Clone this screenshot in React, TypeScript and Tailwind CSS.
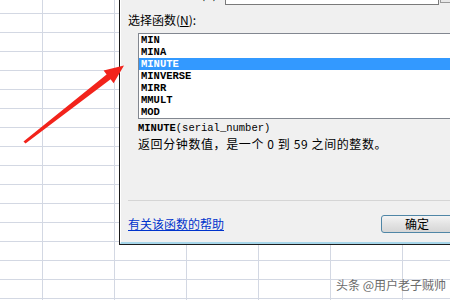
import React from 'react';

const cjk = '"Noto Sans CJK SC", "Liberation Sans", sans-serif';
const mono = '"Liberation Mono", "DejaVu Sans Mono", monospace';

const functions = ['MIN', 'MINA', 'MINUTE', 'MINVERSE', 'MIRR', 'MMULT', 'MOD'];
const selected = 'MINUTE';

const Arrow: React.FC = () => (
  <svg className="absolute left-0 top-0 pointer-events-none" width="450" height="300" viewBox="0 0 450 300">
    <polygon
      points="23.5,141.5 106.6,74.6 103.6,70.6 124,65.5 113.6,83.2 110.6,79.2 25.5,143.5"
      fill="#f2231b"
    />
  </svg>
);

export default function App() {
  return (
    <div
      className="relative w-[450px] h-[300px] overflow-hidden bg-white bg-[linear-gradient(to_right,#d3d8e3_1px,transparent_1px),linear-gradient(to_bottom,#d3d8e3_1px,transparent_1px)] bg-[size:72px_19px] bg-[position:42px_13px]"
      style={{ fontFamily: cjk }}
    >
      {/* dialog window */}
      <div className="absolute left-[119px] top-0 w-[345px] h-[245px] border-l border-b border-[#1c1c1c] bg-[#f0f0f0]">
        <div className="h-full flex flex-col border-l border-white border-b-2 border-b-[#a6d6ea]">
          {/* cut-off category row */}
          <div className="flex items-end h-[6px] overflow-hidden">
            <span className="ml-[20px] text-[12px] leading-[16px] text-black mb-[4px] w-[84px] shrink-0">或选择类别(C):</span>
            <div className="w-[214px] h-[20px] shrink-0 bg-white border border-[#7a7a7a] mb-[1px]"></div>
            <div className="w-[14px] h-[14px] shrink-0 ml-[1px] mb-[3px] bg-[#e8e8e8] border border-[#9a9a9a]"></div>
          </div>

          <div className="pl-[7px] mt-[6px] text-[12px] leading-[16px] text-black">
            选择函数(<span className="underline">N</span>):
          </div>

          {/* function list */}
          <div
            className="ml-[17px] mt-[5px] h-[86px] bg-white border border-[#828790] overflow-hidden"
            style={{ fontFamily: mono }}
          >
            {functions.map((f) => (
              <div
                key={f}
                className={
                  f === selected
                    ? 'h-[12px] pl-[2px] text-[10.5px] leading-[12px] font-bold bg-[#3399ff] text-white'
                    : 'h-[12px] pl-[2px] text-[10.5px] leading-[12px] font-bold text-black'
                }
              >
                {f}
              </div>
            ))}
          </div>

          <div className="ml-[17px] mt-[3px] text-[10.5px] leading-[12px] text-black" style={{ fontFamily: mono }}>
            <span className="font-bold">MINUTE</span>(serial_number)
          </div>
          <div className="ml-[17px] mt-[2px] text-[12px] leading-[16px] tracking-[0.6px] text-black whitespace-nowrap">
            返回分钟数值，是一个 0 到 59 之间的整数。
          </div>

          <div className="ml-[7px] mt-[48px] h-px bg-[#d5d5d5]"></div>

          <div className="flex items-center justify-between mt-[14px] pl-[7px]">
            <a className="text-[12px] leading-[16px] text-[#0033cc] underline" href="#">
              有关该函数的帮助
            </a>
            <button className="w-[72px] h-[18px] mr-[11px] rounded-[3px] border border-[#4f86a6] bg-[linear-gradient(to_bottom,#f4f4f4,#e3e3e3_50%,#d6d6d6)] text-[12px] leading-[14px] text-black">
              确定
            </button>
          </div>
        </div>
      </div>

      <Arrow />

      {/* watermark */}
      <div className="absolute left-[336px] top-[277px] text-[12px] leading-[16px] text-[#6b6b6b] whitespace-nowrap [text-shadow:0_0_2px_#ffffff]">
        头条 @用户老子贼帅
      </div>
    </div>
  );
}
